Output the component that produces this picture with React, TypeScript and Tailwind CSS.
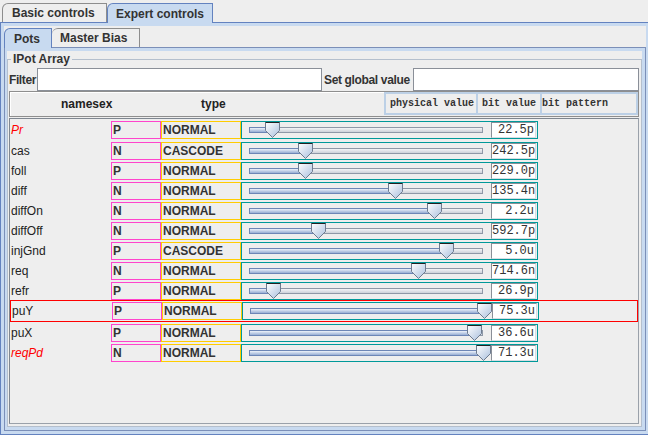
import React from 'react';

interface PotRow {
    name: string;
    sex: 'P' | 'N';
    type: string;
    pos: number;
    value: string;
    red?: boolean;
    selected?: boolean;
}

const POTS: PotRow[] = [
    { name: 'Pr', sex: 'P', type: 'NORMAL', pos: 16, value: '22.5p', red: true },
    { name: 'cas', sex: 'N', type: 'CASCODE', pos: 49, value: '242.5p' },
    { name: 'foll', sex: 'P', type: 'NORMAL', pos: 49, value: '229.0p' },
    { name: 'diff', sex: 'N', type: 'NORMAL', pos: 139, value: '135.4n' },
    { name: 'diffOn', sex: 'N', type: 'NORMAL', pos: 178, value: '2.2u' },
    { name: 'diffOff', sex: 'N', type: 'NORMAL', pos: 62, value: '592.7p' },
    { name: 'injGnd', sex: 'P', type: 'CASCODE', pos: 190, value: '5.0u' },
    { name: 'req', sex: 'N', type: 'NORMAL', pos: 162, value: '714.6n' },
    { name: 'refr', sex: 'P', type: 'NORMAL', pos: 17, value: '26.9p' },
    { name: 'puY', sex: 'P', type: 'NORMAL', pos: 227, value: '75.3u', selected: true },
    { name: 'puX', sex: 'P', type: 'NORMAL', pos: 218, value: '36.6u' },
    { name: 'reqPd', sex: 'N', type: 'NORMAL', pos: 227, value: '71.3u', red: true },
];

const Thumb: React.FC<{ left: number }> = ({ left }) => (
    <svg width="15" height="16" viewBox="0 0 15 16" className="absolute top-0" style={{ left }}>
        <defs>
            <linearGradient id="thumbGrad" x1="0" y1="0" x2="1" y2="1">
                <stop offset="0" stopColor="#ffffff" />
                <stop offset="1" stopColor="#a9bfdd" />
            </linearGradient>
        </defs>
        <path d="M0.5 0.5 H14.5 V8.5 L7.5 15.5 L0.5 8.5 Z" fill="url(#thumbGrad)" stroke="#6d7b8f" />
        <path d="M0.5 0.5 H14.5" stroke="#222" />
    </svg>
);

const Slider: React.FC<{ pos: number }> = ({ pos }) => (
    <div className="relative ml-[7px] w-[234px] h-[16px] shrink-0">
        <div className="flex mt-[5px] h-[6px]">
            <div
                className="h-full border border-r-0 border-[#6d86b6] bg-linear-to-b from-[#eef3fa] to-[#98aed4]"
                style={{ width: pos + 7 }}
            />
            <div className="h-full flex-1 border border-l-0 border-[#8e98a7] bg-linear-to-b from-[#f4f5f7] to-[#cdd2da]" />
        </div>
        <Thumb left={pos} />
    </div>
);

const Row: React.FC<{ row: PotRow; first?: boolean }> = ({ row, first }) => (
    <div
        className={
            row.selected
                ? 'flex items-center h-[22px] border border-[#ff0000]'
                : first
                  ? 'flex items-center h-[21px] pt-[1px]'
                  : 'flex items-center h-[20px] pt-[1px]'
        }
    >
        <div
            className={
                row.red
                    ? 'w-[101px] pl-[1px] italic text-[#ff0000]'
                    : 'w-[101px] pl-[1px] text-[#222]'
            }
        >
            {row.name}
        </div>
        <div className="w-[50px] h-[18px] border border-[#ff44cc] pl-[1px] font-bold leading-[16px]">{row.sex}</div>
        <div className="w-[80px] h-[18px] border border-[#ffcc00] pl-[1px] font-bold leading-[16px]">{row.type}</div>
        <div className="w-[297px] h-[18px] border border-[#009999] flex items-center">
            <Slider pos={row.pos} />
            <div className="ml-[8px] w-[45px] h-[16px] bg-white border border-[#8a8f98] border-r-[#d8dce2] border-b-[#d8dce2] text-right pr-[1px] font-['Liberation_Mono',monospace] text-[12px] leading-[14px] text-[#333]">
                {row.value}
            </div>
        </div>
    </div>
);

const App: React.FC = () => {
    return (
        <div className="w-[648px] h-[435px] bg-[#eeeeee] flex flex-col overflow-hidden font-['Liberation_Sans',Arial,sans-serif] text-[12px] text-[#333]">
            {/* outer tabs */}
            <div className="flex items-end h-[22px] pl-[2px] shrink-0">
                <div className="h-[19px] w-[105px] border border-b-0 border-[#8d8d8d] rounded-tl-[6px] pl-[9px] font-bold flex items-center">
                    Basic controls
                </div>
                <div className="relative z-10 -mb-px h-[20px] w-[106px] bg-[#c8daf0] border border-b-0 border-[#6382bf] rounded-tl-[6px] pl-[8px] font-bold flex items-center">
                    Expert controls
                </div>
            </div>

            {/* outer tab content */}
            <div className="flex-1 min-h-0 border-t border-l border-b border-[#6382bf] bg-[#c8daf0] pt-[3px] pl-[3px] pr-[2px] pb-[3px] flex flex-col">
                <div className="flex-1 min-h-0 bg-[#eeeeee] flex flex-col">
                    {/* inner tabs */}
                    <div className="flex items-end h-[21px] shrink-0">
                        <div className="relative z-10 -mb-px h-[20px] w-[48px] bg-[#c8daf0] border border-b-0 border-[#6382bf] rounded-tl-[6px] pl-[9px] font-bold flex items-center">
                            Pots
                        </div>
                        <div className="h-[19px] w-[88px] border border-b-0 border-l-0 border-[#8d8d8d] rounded-tl-[6px] pl-[8px] font-bold flex items-center">
                            Master Bias
                        </div>
                    </div>

                    {/* inner tab content */}
                    <div className="flex-1 min-h-0 border border-[#7b8fb8] bg-[#c8daf0] pt-[3px] pl-[2px] pr-[3px] pb-[3px] flex flex-col">
                        <div className="flex-1 min-h-0 bg-[#eeeeee] flex flex-col">
                            <fieldset className="flex-1 min-h-0 flex flex-col border border-[#b4bfcd] pl-[1px] pr-[2px] pb-[2px]">
                                <legend className="ml-[2px] px-[2px] font-bold leading-[17px]">IPot Array</legend>

                                {/* filter row */}
                                <div className="flex items-center h-[23px] shrink-0 whitespace-nowrap">
                                    <span className="w-[28px] font-bold tracking-[-0.4px]">Filter</span>
                                    <div className="w-[285px] h-[23px] bg-white border border-[#8a8f98]" />
                                    <span className="w-[91px] font-bold pl-[2px] tracking-[-0.35px]">Set global value</span>
                                    <div className="flex-1 h-[23px] bg-white border border-[#8a8f98]" />
                                </div>

                                {/* table header */}
                                <div className="h-[26px] shrink-0 border border-[#8e8e8e] shadow-[inset_1px_1px_0_#ffffff] flex items-center">
                                    <div className="w-[191px] pl-[51px] font-bold text-[#222]">namesex</div>
                                    <div className="flex-1 font-bold text-[#222]">type</div>
                                    <div className="self-end mb-[1px] flex h-[23px] font-['Liberation_Mono',monospace] text-[10px] font-bold text-[#333]">
                                        <div className="w-[94px] border-2 border-[#bcd0e6] pl-[4px] flex items-center">physical value</div>
                                        <div className="w-[64px] border-2 border-l-0 border-[#bcd0e6] pl-[4px] flex items-center">bit value</div>
                                        <div className="w-[96px] border-2 border-l-0 border-[#bcd0e6] flex items-center">bit pattern</div>
                                    </div>
                                </div>

                                {/* rows */}
                                <div className="mt-[1px] flex-1 min-h-0 border border-[#7f8791] border-r-[#9aa1aa] border-b-[#9aa1aa] overflow-hidden">
                                    {POTS.map((row, i) => (
                                        <Row key={row.name} row={row} first={i === 0} />
                                    ))}
                                </div>
                            </fieldset>
                        </div>
                    </div>
                </div>
            </div>
        </div>
    );
};

export default App;
